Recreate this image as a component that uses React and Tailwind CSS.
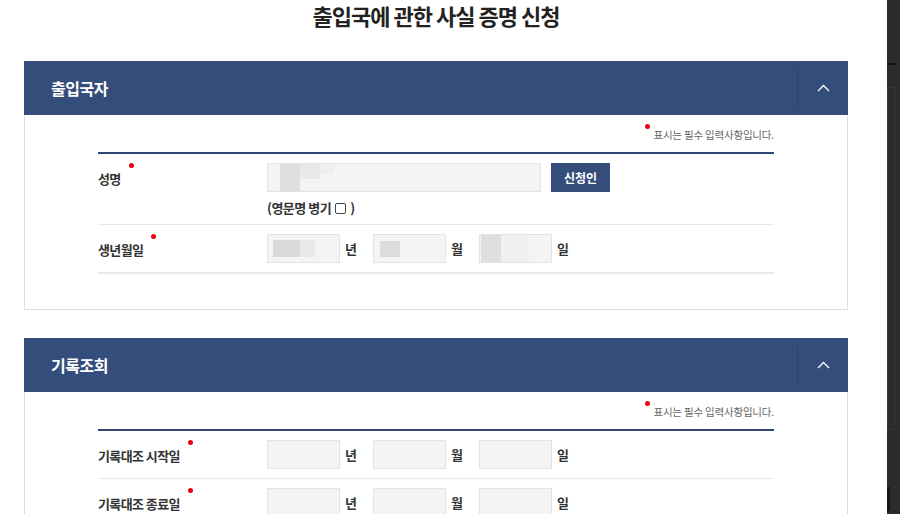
import React from 'react';

const FONT = { fontFamily: '"Noto Sans CJK KR", "Noto Sans", sans-serif' };

function Dot() {
  return <span className="inline-block w-[5px] h-[5px] rounded-full bg-[#e60012] ml-[8px] -mt-[6px] shrink-0" />;
}

function Label({ children }) {
  return (
    <div className="w-[169px] shrink-0 flex items-start pt-[2px]">
      <span className="text-[13px] leading-[20px] font-bold text-[#333] tracking-[-0.6px]">{children}</span>
      <Dot />
    </div>
  );
}

function Box({ className = '', children }) {
  return (
    <div className={'h-[29px] bg-[#f4f4f4] border border-[#e3e3e3] flex items-center overflow-hidden ' + className}>
      {children}
    </div>
  );
}

function Unit({ children }) {
  return <span className="w-[33px] shrink-0 pl-[5px] text-[13px] font-bold text-[#333]">{children}</span>;
}

function DateRow({ label, blur, last }) {
  return (
    <div className={'flex items-center py-[9px] ' + (last ? '' : 'border-b border-[#e9e9e9]')}>
      <Label>{label}</Label>
      <Box className="w-[73px]">
        {blur && (
          <>
            <span className="ml-[5px] w-[27px] h-[17px] bg-[#dadada]" />
            <span className="w-[15px] h-[17px] bg-[#e8e8e8]" />
          </>
        )}
      </Box>
      <Unit>년</Unit>
      <Box className="w-[73px]">
        {blur && <span className="ml-[6px] w-[20px] h-[16px] bg-[#dcdcdc]" />}
      </Box>
      <Unit>월</Unit>
      <Box className="w-[73px]">
        {blur && (
          <>
            <span className="ml-[1px] w-[20px] h-[27px] bg-[#dedede]" />
            <span className="w-[28px] h-[27px] bg-[#f0f0f0]" />
          </>
        )}
      </Box>
      <Unit>일</Unit>
    </div>
  );
}

function PanelHeader({ title }) {
  return (
    <div className="h-[54px] bg-[#344d7b] flex items-center">
      <span className="pl-[27px] flex-1 text-white text-[16px] font-bold tracking-[-0.5px]">{title}</span>
      <div className="w-[51px] h-[38px] border-l border-[#2c436d] flex items-center justify-center">
        <svg width="13" height="8" viewBox="0 0 13 8" fill="none">
          <path d="M1 7 L6.5 1.5 L12 7" stroke="white" strokeWidth="1.3" />
        </svg>
      </div>
    </div>
  );
}

function Note() {
  return (
    <div className="h-[37px] flex justify-end items-start pt-[9px]">
      <span className="inline-block w-[5px] h-[5px] rounded-full bg-[#e60012] mr-[3px]" />
      <span className="text-[10.5px] text-[#666] leading-[18px] pt-[2px] tracking-[-0.2px]">표시는 필수 입력사항입니다.</span>
    </div>
  );
}

export default function App() {
  return (
    <div className="w-[900px] h-[514px] overflow-hidden flex bg-white" style={FONT}>
      <div className="w-[887px] shrink-0">
        {/* title */}
        <h1 className="h-[61px] text-center text-[22px] font-bold text-[#222] tracking-[-1px] leading-[30px] pr-[15px]">
          출입국에 관한 사실 증명 신청
        </h1>

        {/* 출입국자 */}
        <section className="ml-[24px] w-[824px]">
          <PanelHeader title="출입국자" />
          <div className="border border-t-0 border-[#dcdcdc] px-[73px] h-[195px]">
            <Note />
            <div className="border-t-2 border-[#2f4573]">
              <div className="border-b border-[#e9e9e9] pt-[9px]">
                <div className="flex items-center">
                  <Label>성명</Label>
                  <Box className="w-[274px]">
                    <span className="ml-[12px] w-[20px] h-[29px] bg-[#dfdfdf]" />
                    <span className="w-[20px] h-[15px] self-start bg-[#e9e9e9]" />
                    <span className="w-[14px] h-[10px] self-start bg-[#efefef]" />
                  </Box>
                  <button className="ml-[10px] w-[59px] h-[29px] bg-[#344d7b] text-white text-[12px] font-bold">신청인</button>
                </div>
                <div className="pl-[169px] h-[32px] flex items-center text-[13px] font-bold text-[#333] tracking-[-0.5px]">
                  (영문명 병기
                  <span className="inline-block w-[11px] h-[11px] border border-[#444] rounded-[2px] ml-[4px] mr-[4px]" />
                  )
                </div>
              </div>
              <DateRow label="생년월일" blur />
              <div className="border-t border-[#e9e9e9]" />
            </div>
          </div>
        </section>

        {/* 기록조회 */}
        <section className="ml-[24px] w-[824px] mt-[28px]">
          <PanelHeader title="기록조회" />
          <div className="border border-t-0 border-[#dcdcdc] px-[73px] h-[200px]">
            <Note />
            <div className="border-t-2 border-[#2f4573]">
              <DateRow label="기록대조 시작일" />
              <DateRow label="기록대조 종료일" last />
            </div>
          </div>
        </section>
      </div>

      {/* dark side strip */}
      <div className="w-[13px] shrink-0 bg-[#2b2b2b] flex flex-col">
        <div className="h-[63px]" />
        <div className="h-[2px] w-[8px] bg-[#0f0f0f]" />
        <div className="h-[22px]" />
        <div className="h-[343px] w-[8px] border border-[#363636]" />
        <div className="h-[57px]" />
        <div className="h-[24px] w-[3px] bg-[#161616]" />
      </div>
    </div>
  );
}
